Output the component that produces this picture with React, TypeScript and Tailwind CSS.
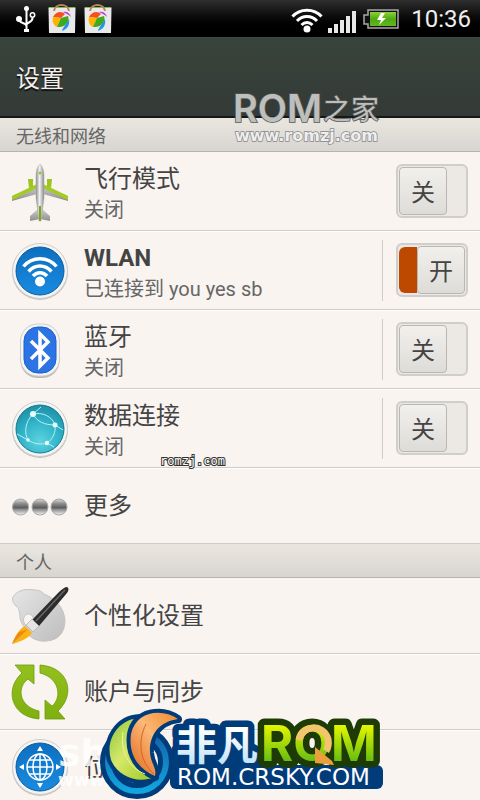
import type { ReactNode } from "react"

const SANS = "font-['Roboto','Noto_Sans_CJK_SC',sans-serif]"

function Defs() {
  return (
    <svg className="absolute size-0" aria-hidden="true">
      <defs>
        <linearGradient id="blue" x1="0" y1="0" x2="0" y2="1">
          <stop offset="0" stopColor="#0c6fc0" />
          <stop offset="1" stopColor="#1a8be0" />
        </linearGradient>
        <radialGradient id="teal" cx=".5" cy=".75" r=".7">
          <stop offset="0" stopColor="#5cd3e0" />
          <stop offset=".6" stopColor="#2fb2c8" />
          <stop offset="1" stopColor="#1f93aa" />
        </radialGradient>
        <linearGradient id="metal" x1="0" y1="0" x2="1" y2="0">
          <stop offset="0" stopColor="#8c8c8c" />
          <stop offset=".45" stopColor="#f2f2f2" />
          <stop offset="1" stopColor="#8a8a8a" />
        </linearGradient>
        <linearGradient id="wing" x1="0" y1="0" x2="0" y2="1">
          <stop offset="0" stopColor="#d0d0d0" />
          <stop offset="1" stopColor="#8e8e8e" />
        </linearGradient>
        <linearGradient id="ball" x1="0" y1="0" x2="0" y2="1">
          <stop offset="0" stopColor="#dcdcdc" />
          <stop offset=".3" stopColor="#8a8a8a" />
          <stop offset=".55" stopColor="#5c5c5c" />
          <stop offset=".65" stopColor="#8c8c8c" />
          <stop offset="1" stopColor="#f4f4f4" />
        </linearGradient>
        <linearGradient id="palette" x1="0" y1="0" x2="1" y2="1">
          <stop offset="0" stopColor="#e6e6e6" />
          <stop offset="1" stopColor="#bdbdbd" />
        </linearGradient>
        <linearGradient id="sync" x1="0" y1="0" x2="0" y2="1">
          <stop offset="0" stopColor="#93c01c" />
          <stop offset="1" stopColor="#7fb010" />
        </linearGradient>
        <linearGradient id="battery" x1="0" y1="0" x2="0" y2="1">
          <stop offset="0" stopColor="#8fd13a" />
          <stop offset=".5" stopColor="#4fa811" />
          <stop offset="1" stopColor="#63b81e" />
        </linearGradient>
        <linearGradient id="leaf" x1="0" y1="0" x2="1" y2="1">
          <stop offset="0" stopColor="#8cc63a" />
          <stop offset=".45" stopColor="#d6e86a" />
          <stop offset="1" stopColor="#9cc91f" />
        </linearGradient>
        <linearGradient id="flame" x1="1" y1="0" x2="0" y2="1">
          <stop offset="0" stopColor="#f08a2a" />
          <stop offset=".45" stopColor="#fbb877" />
          <stop offset="1" stopColor="#e0661c" />
        </linearGradient>
        <linearGradient id="ring" x1="0" y1="0" x2="0" y2="1">
          <stop offset="0" stopColor="#1560a8" />
          <stop offset="1" stopColor="#12a5e0" />
        </linearGradient>
        <linearGradient id="ice" x1="0" y1="0" x2="0" y2="1">
          <stop offset=".3" stopColor="#ffffff" />
          <stop offset="1" stopColor="#b4dcf6" />
        </linearGradient>
        <linearGradient id="lime" x1="0" y1="0" x2="0" y2="1">
          <stop offset=".2" stopColor="#e4f500" />
          <stop offset=".85" stopColor="#5cb814" />
        </linearGradient>
      </defs>
    </svg>
  )
}

function UsbIcon() {
  return (
    <svg width="20" height="28" viewBox="0 0 20 28" fill="none" stroke="#fff" strokeWidth="2">
      <path d="M10.500 3v22M10.500 21C10 17 3 19 2.500 14M10.500 20c0-3 6-2 6-7" />
      <circle cx="10.500" cy="3.500" r="2.500" fill="#fff" stroke="none" />
      <circle cx="3" cy="14" r="3" fill="#fff" stroke="none" />
      <circle cx="16.500" cy="10" r="2.200" strokeWidth="1.500" />
      <path d="M8 25.500h5" strokeWidth="3" />
    </svg>
  )
}

function BagIcon() {
  return (
    <svg width="28" height="30" viewBox="0 0 28 30">
      <path d="M0.500 3.500h27L27 29H1z" fill="#e9e9e9" />
      <path d="M1 3.500h26" stroke="#7cb85c" />
      <path d="M6 7C7-1 20-1 21 7" fill="none" stroke="#b98858" strokeWidth="2" />
      <path d="M5 13c3-6 9-6 12-3l-4 4z" fill="#f4511e" />
      <path d="M5 13l8 1-4 9c-4-2-5-6-4-10z" fill="#ffb300" />
      <path d="M13 14l7-2c2 5-2 12-11 11z" fill="#43a81c" />
      <path d="M21 15c1 5-1 10-7 12 1-4 4-6 7-12z" fill="#1e96f0" />
      <path d="M15 8c4-1 7 1 8 5-3-3-4-3-8-5z" fill="#c03de0" />
    </svg>
  )
}

function StatusBar() {
  return (
    <div className="flex h-[38px] shrink-0 items-center border-b border-[#444] bg-linear-to-b from-[#2f2f2f] to-black to-90% pl-4 pr-[9px]">
      <UsbIcon />
      <div className="ml-3 flex flex-1 gap-2">
        <BagIcon />
        <BagIcon />
      </div>
      <svg width="32" height="28" viewBox="0 0 32 28" fill="none" stroke="#fff" strokeWidth="3">
        <path d="M1.500 11.500C9 3 23 3 30.500 11.500M6 16C11.500 10 20.500 10 26 16M10.500 20C14 16.500 18 16.500 21.500 20" />
        <circle cx="16" cy="24" r="3.500" fill="#fff" stroke="none" />
      </svg>
      <svg className="ml-1 mt-1" width="30" height="24" viewBox="0 0 30 24" fill="#e8e8e8">
        <path d="M1 19h4v5H1zM7 15h4v9H7zM13 11h4v13h-4zM19 7h4v17h-4zM25 2h4v22h-4z" />
      </svg>
      <svg className="ml-1.5" width="36" height="20" viewBox="0 0 36 20">
        <path d="M5 1h30v18H5v-4H1V6h4z" fill="#111" stroke="#a8a8a8" strokeWidth="1.500" />
        <path d="M7 3h26v14H7z" fill="url(#battery)" />
        <path d="M18 4l-4 7h4l-2 5 7-7h-4l3-5z" fill="#fff" />
      </svg>
      <span className="ml-3 text-2xl leading-none text-[#eee]">10:36</span>
    </div>
  )
}

function Disc({ children }: { children: ReactNode }) {
  return (
    <>
      <circle cx="29" cy="30" r="28" fill="#c4c2c0" />
      <circle cx="29" cy="29" r="27.500" fill="#f4f4f4" stroke="#cfcdcb" strokeWidth="1" />
      {children}
    </>
  )
}

function PlaneIcon() {
  return (
    <svg width="58" height="60" viewBox="0 0 58 60">
      <path d="M26 22L1 33v5l25-7zM32 22l25 11v5l-25-7z" fill="url(#wing)" />
      <path d="M26 21L1 33v4l25-12zM32 21l25 12v4L32 25z" fill="#a3cc1f" />
      <path d="M17 16h5v8l-4 1zM36 16h5l-1 9-4-1z" fill="#9cc51d" />
      <path d="M27 46l-8 7v5l10-2 10 2v-5l-8-7z" fill="url(#wing)" />
      <path d="M29 1c3 3 4 7 4 12v22l-3 23h-2l-3-23V13c0-5 1-9 4-12z" fill="url(#metal)" stroke="#aaa" strokeWidth=".5" />
      <path d="M29 43v15" stroke="#7fa810" strokeWidth="2" />
      <circle cx="29" cy="10" r="1.500" fill="#9cc51d" />
    </svg>
  )
}

function WlanIcon() {
  return (
    <svg width="58" height="60" viewBox="0 0 58 60">
      <Disc>
        <circle cx="29" cy="29" r="24" fill="url(#blue)" stroke="#0c5a9c" />
        <g fill="none" stroke="#fff" strokeWidth="3.500">
          <path d="M12.500 24.500C21 14 37 14 45.500 24.500M17.500 29.500C24 22 34 22 40.500 29.500M22 34C26 29.500 32 29.500 36 34" />
        </g>
        <circle cx="29" cy="39.500" r="5" fill="#fff" />
      </Disc>
    </svg>
  )
}

function BluetoothIcon() {
  return (
    <svg width="58" height="60" viewBox="0 0 58 60">
      <rect x="9.500" y="4" width="39" height="53" rx="17" fill="#bdbbb9" />
      <rect x="9.500" y="3" width="39" height="52" rx="17" fill="#f4f4f4" stroke="#d0cecc" />
      <rect x="13" y="6" width="32" height="46" rx="14" fill="#2c74e4" stroke="#1f5fca" />
      <path d="M20 20l17 17-8 8V13l8 8-17 17" fill="none" stroke="#fff" strokeWidth="3.500" />
    </svg>
  )
}

function DataIcon() {
  return (
    <svg width="58" height="60" viewBox="0 0 58 60">
      <Disc>
        <circle cx="29" cy="29" r="24" fill="url(#teal)" stroke="#147a8c" />
        <g fill="none" stroke="#b8f0f5" strokeWidth="1">
          <path d="M22 14c-8 8-9 19-5 26M22 14c4 8 12 11 22 11M44 25c1 7-2 14-8 18M17 40c6 4 13 5 19 3M22 14c9-2 19 2 22 11M22 14l8-7M44 25l8 5M17 40l-11-6M36 43l7 4" />
        </g>
        <g fill="#e8ffff">
          <circle cx="22" cy="14" r="3" />
          <circle cx="44" cy="25" r="2.500" />
          <circle cx="17" cy="40" r="1.800" />
          <circle cx="36" cy="43" r="2.200" />
        </g>
      </Disc>
    </svg>
  )
}

function MoreIcon() {
  return (
    <svg width="58" height="60" viewBox="0 0 58 60" fill="url(#ball)" stroke="#a8a8a8">
      <circle cx="9.500" cy="31" r="8" />
      <circle cx="29" cy="31" r="8" />
      <circle cx="48" cy="31" r="8" />
    </svg>
  )
}

function PaletteIcon() {
  return (
    <svg width="58" height="60" viewBox="0 0 58 60">
      <path
        fillRule="evenodd"
        d="M2 11C7 3 16 3 24 4c4 0 6 1 9 4 12 5 20 14 21 26 0 12-6 20-18 21-9 1-18-3-21-10-2-6-6-8-6-15-1-6-1-8-4-10-3-3-4-6-3-9zM17 28a5 6 0 1 0 1 0z"
        fill="url(#palette)"
        stroke="#c4c4c4"
      />
      <path d="M56 1c2 1 2 3 0 6L28 40l-7-6L48 6c3-3 6-5 8-5z" fill="#2c2c2c" />
      <path d="M54 4L25 35" stroke="#666" strokeWidth="1.500" />
      <path d="M21 33l7 7-6 6-7-7z" fill="#e4e4e4" stroke="#999" strokeWidth=".5" />
      <path d="M14 40l7 7c-4 6-13 9-20 11C4 52 7 43 14 40z" fill="#f9b414" />
      <path d="M17 43L1 58c2-5 4-9 7-12z" fill="#ec8a14" />
    </svg>
  )
}

function SyncIcon() {
  return (
    <svg width="58" height="60" viewBox="0 0 58 60">
      <g fill="url(#sync)" stroke="#6f9c0c" strokeWidth=".8">
        <path d="M4 3h19v19l-6-5C6 25 7 44 28 49v8C0 55-7 27 11 11z" />
        <path d="M54 57H34V38l7 6c10-8 8-28-12-33V3c29 2 36 29 18 46z" />
      </g>
    </svg>
  )
}

function LocationIcon() {
  return (
    <svg width="58" height="60" viewBox="0 0 58 60">
      <Disc>
        <circle cx="29" cy="29" r="24" fill="url(#blue)" stroke="#0c5a9c" />
        <g fill="none" stroke="#fff" strokeWidth="1.500">
          <circle cx="29" cy="29" r="13" />
          <ellipse cx="29" cy="29" rx="7" ry="13" />
          <path d="M29 16v26M16 29h26M18 22h22M18 36h22" />
        </g>
        <path d="M29 8l3 5h-6zM29 50l3-5h-6zM8 29l5-3v6zM50 29l-5-3v6z" fill="#fff" />
      </Disc>
    </svg>
  )
}

function Toggle({ on, label }: { on?: boolean; label: string }) {
  return (
    <button
      type="button"
      role="switch"
      aria-checked={!!on}
      aria-label={label}
      className="flex h-[54px] w-[72px] items-center rounded-md border-2 border-[#d0cecb] bg-[#ece8e4] px-px"
    >
      {on && <span className="h-[46px] w-[18px] rounded-l-md bg-[#bd4900]" />}
      <span className="flex h-12 w-12 items-center justify-center rounded-sm border border-[#b9b7b4] bg-linear-to-b from-[#f1f0ed] to-[#dedcd8] pt-1 text-2xl text-[#444]">
        {on ? "开" : "关"}
      </span>
    </button>
  )
}

type RowProps = {
  icon: ReactNode
  title: string
  status?: string
  bold?: boolean
  divider?: boolean
  on?: boolean
}

function ToggleRow({ icon, title, status, bold, divider, on }: RowProps) {
  return (
    <li className="flex h-[79px] shrink-0 items-center border-b border-[#cfccc9] pl-[11px] pr-3 shadow-[0_1px_0_#fff]">
      <span className="pt-1">{icon}</span>
      <div className="ml-[15px] flex-1 pt-2">
        <div className={`text-2xl leading-[30px] text-[#444] ${bold ? "font-bold" : ""}`}>{title}</div>
        <div className="text-xl leading-8 text-[#666]">{status}</div>
      </div>
      <div className={`flex h-[61px] items-center border-l pl-[13px] ${divider ? "border-[#cfccc9]" : "border-transparent"}`}>
        <Toggle on={on} label={title} />
      </div>
    </li>
  )
}

function LinkRow({ icon, title }: RowProps) {
  return (
    <li className="flex h-[76px] shrink-0 items-center border-b border-[#cfccc9] pl-[11px] shadow-[0_1px_0_#fff]">
      {icon}
      <div className="ml-[15px] text-2xl text-[#444]">{title}</div>
    </li>
  )
}

function SectionTitle({ children }: { children: ReactNode }) {
  return (
    <h2 className="flex h-[34px] shrink-0 items-center border-b border-[#b5b3b0] bg-linear-to-b from-[#eae6df] to-[#d8d5d1] pl-4 pt-1 text-lg text-[#666]">
      {children}
    </h2>
  )
}

function RomzjMark() {
  return (
    <svg className="absolute left-[230px] top-[88px]" width="170" height="60" viewBox="0 0 170 60" fill="#bdbfbd" stroke="#555" strokeWidth="1.500" paintOrder="stroke">
      <text x="3" y="34" fontFamily="Inter, sans-serif" fontSize="38" fontWeight="600">ROM</text>
      <text x="93" y="32" fontFamily="Noto Sans CJK SC, sans-serif" fontSize="28">之家</text>
      <text x="5" y="53" fontFamily="DejaVu Sans, sans-serif" fontSize="16" fontWeight="700" fill="#eee" stroke="#888">www.romzj.com</text>
    </svg>
  )
}

function CrskyLogo() {
  return (
    <svg className="absolute left-[96px] top-[700px]" width="300" height="100" viewBox="0 0 300 100">
      <circle cx="41" cy="62" r="29" fill="none" stroke="#003b7a" strokeWidth="16" />
      <circle cx="41" cy="62" r="29" fill="none" stroke="url(#ring)" strokeWidth="6" />
      <g stroke="#003b7a" strokeWidth="8" strokeLinejoin="round" paintOrder="stroke">
        <path d="M44 18C22 19 9 40 15 60c7 17 27 24 44 17C40 66 29 42 44 18z" fill="url(#leaf)" />
        <path d="M82 19C66 8 40 11 35 34c-3 22 9 36 24 42 2-8-4-12-5-23-1-17 8-31 28-34z" fill="url(#flame)" />
      </g>
      <path d="M27 32c-3 20 6 36 22 42" fill="none" stroke="#edf49c" strokeWidth="1" />
      <path d="M50 24c-9 18-6 38 8 50" fill="none" stroke="#d8641c" strokeWidth="1" />
      <path d="M74 50h100v20H74z" fill="#003b7a" />
      <rect x="74" y="65" width="213" height="24" rx="6" fill="#003b7a" />
      <g strokeWidth="13" strokeLinejoin="round" paintOrder="stroke">
        <text x="80" y="60" fontFamily="Noto Sans CJK SC, sans-serif" fontSize="41" fontWeight="700" fill="url(#ice)" stroke="#003b7a">非凡</text>
        <text x="165" y="61" fontFamily="Inter, sans-serif" fontSize="49" fontWeight="700" fill="url(#lime)" stroke="#1e3b05">ROM</text>
      </g>
      {/* arrow running round the O */}
      <path d="M203 40c3-15 24-17 29-1 1 6 0 9-2 12" fill="none" stroke="#f3c46e" strokeWidth="7" />
      <path d="M219 47l17 14 2 4-19-2z" fill="#e9a03c" />
      <text x="81" y="85" fontFamily="DejaVu Sans, sans-serif" fontSize="23" fill="#fff">ROM.CRSKY.COM</text>
    </svg>
  )
}

export default function App() {
  return (
    <main className={`relative flex h-screen flex-col overflow-hidden bg-[#f9f4f0] ${SANS}`}>
      <Defs />
      <StatusBar />
      <header className="flex h-20 shrink-0 items-center border-b-2 border-[#151817] bg-linear-to-b from-[#38443b] to-[#343a37] pl-4 pt-1">
        <h1 className="text-2xl text-[#f2eee9] [text-shadow:0_2px_1px_#111]">设置</h1>
      </header>

      <SectionTitle>无线和网络</SectionTitle>
      <ul className="shrink-0">
        <ToggleRow icon={<PlaneIcon />} title="飞行模式" status="关闭" />
        <ToggleRow icon={<WlanIcon />} title="WLAN" status="已连接到 you yes sb" bold divider on />
        <ToggleRow icon={<BluetoothIcon />} title="蓝牙" status="关闭" divider />
        <ToggleRow icon={<DataIcon />} title="数据连接" status="关闭" divider />
        <LinkRow icon={<MoreIcon />} title="更多" />
      </ul>

      <SectionTitle>个人</SectionTitle>
      <ul className="shrink-0">
        <LinkRow icon={<PaletteIcon />} title="个性化设置" />
        <LinkRow icon={<SyncIcon />} title="账户与同步" />
        <LinkRow icon={<LocationIcon />} title="位置" />
      </ul>

      {/* site marks over the list */}
      <RomzjMark />
      <svg className="absolute left-[158px] top-[450px]" width="76" height="20" viewBox="0 0 76 20">
        <text x="2" y="15" fontFamily="DejaVu Sans Mono, monospace" fontSize="12" fill="#fff" stroke="#333" strokeWidth="2" paintOrder="stroke">romzj.com</text>
      </svg>
      <svg className="absolute left-[56px] top-[730px]" width="120" height="60" viewBox="0 0 120 60" fill="#fff" fillOpacity=".85">
        <text x="2" y="36" fontFamily="DejaVu Sans, sans-serif" fontSize="38" fontWeight="700">sh</text>
        <text x="2" y="56" fontFamily="DejaVu Sans, sans-serif" fontSize="17" fontWeight="700">www.</text>
      </svg>
      <CrskyLogo />
    </main>
  )
}
